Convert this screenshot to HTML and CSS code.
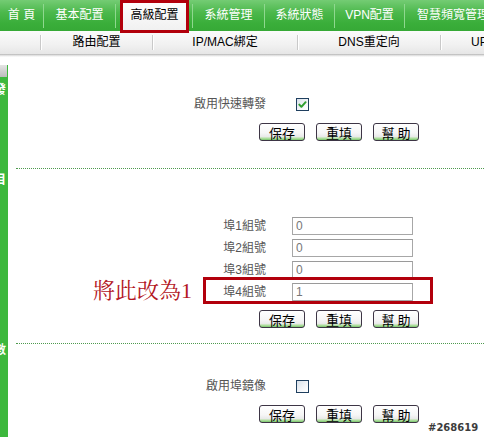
FILE: index.html
```html
<!DOCTYPE html>
<html lang="zh-Hant">
<head>
<meta charset="utf-8">
<title>高級配置</title>
<link rel="stylesheet" href="styles.css">
</head>
<body>
<div class="page">
  <header class="header">
    <nav class="topnav">
      <div class="nav-item w-home">首 頁</div>
      <span class="nav-sep"></span>
      <div class="nav-item w-71">基本配置</div>
      <span class="nav-sep"></span>
      <div class="nav-slot">
        <div class="nav-active">高級配置<span class="mark-box mark-tab"></span></div>
      </div>
      <span class="nav-sep"></span>
      <div class="nav-item w-71">系統管理</div>
      <span class="nav-sep"></span>
      <div class="nav-item w-69">系統狀態</div>
      <span class="nav-sep"></span>
      <div class="nav-item w-69">VPN配置</div>
      <span class="nav-sep"></span>
      <div class="nav-item nav-last">智慧頻寬管理</div>
    </nav>
    <nav class="subnav">
      <div class="sub-item w-40"></div>
      <span class="sub-sep"></span>
      <div class="sub-item w-111">路由配置</div>
      <span class="sub-sep"></span>
      <div class="sub-item w-144">IP/MAC綁定</div>
      <span class="sub-sep"></span>
      <div class="sub-item w-142">DNS重定向</div>
      <span class="sub-sep"></span>
      <div class="sub-item sub-last">UPnP配置</div>
    </nav>
    <div class="shadow"></div>
  </header>

  <div class="main">
    <aside class="sidebar">
      <div class="side-cap"></div>
      <span class="side-glyph g1">發</span>
      <span class="side-glyph g2">目</span>
      <span class="side-glyph g3">數</span>
    </aside>

    <div class="content">
      <section class="sec sec1">
        <div class="row row-check">
          <span class="label">啟用快速轉發</span>
          <span class="checkbox">
            <svg viewBox="0 0 11 11" width="11" height="11"><path d="M2.3 5.6 L4.4 7.8 L8.6 3.2" fill="none" stroke="#2f9e2f" stroke-width="2" stroke-linecap="round" stroke-linejoin="round"/></svg>
          </span>
        </div>
        <div class="btns">
          <button class="btn">保存</button>
          <button class="btn">重填</button>
          <button class="btn">幫 助</button>
        </div>
      </section>

      <section class="sec sec2">
        <div class="row row-input">
          <span class="label">埠1組號</span>
          <input class="field" type="text" value="0">
        </div>
        <div class="row row-input">
          <span class="label">埠2組號</span>
          <input class="field" type="text" value="0">
        </div>
        <div class="row row-input">
          <span class="label">埠3組號</span>
          <input class="field" type="text" value="0">
        </div>
        <div class="row row-input row-marked">
          <span class="note">將此改為1</span>
          <span class="label">埠4組號</span>
          <input class="field" type="text" value="1">
          <span class="mark-box mark-row"></span>
        </div>
        <div class="btns btns-tight">
          <button class="btn">保存</button>
          <button class="btn">重填</button>
          <button class="btn">幫 助</button>
        </div>
      </section>

      <section class="sec sec3">
        <div class="row row-check">
          <span class="label">啟用埠鏡像</span>
          <span class="checkbox"></span>
        </div>
        <div class="btns">
          <button class="btn">保存</button>
          <button class="btn">重填</button>
          <button class="btn">幫 助</button>
        </div>
      </section>
    </div>
  </div>
  <div class="watermark">#268619</div>
</div>
</body>
</html>
```

FILE: styles.css
```css
html, body {
  margin: 0;
  padding: 0;
  height: 100%;
  overflow: hidden;
  background: #ffffff;
}

body {
  font-family: "Liberation Sans", "Noto Sans CJK TC", sans-serif;
  font-size: 12px;
  color: #222;
}

.page {
  position: relative;
  display: flex;
  flex-direction: column;
  height: 100%;
}

/* ---------- top navigation ---------- */
.topnav {
  display: flex;
  align-items: center;
  height: 31px;
  background: linear-gradient(to bottom, #74cc74 0%, #4cb84c 40%, #3aae3a 75%, #36a936 100%);
  color: #ffffff;
  white-space: nowrap;
  overflow: visible;
}

.nav-item {
  flex: none;
  height: 31px;
  line-height: 31px;
  text-align: center;
}

.w-home { width: 43px; }
.w-71 { width: 71px; }
.w-69 { width: 69px; }

.nav-last {
  flex: 1;
  text-align: left;
  padding-left: 12px;
  overflow: hidden;
}

.nav-sep {
  flex: none;
  width: 1px;
  height: 24px;
  background: #8fd88f;
}

.nav-slot {
  flex: none;
  width: 76px;
  height: 31px;
  display: flex;
}

.nav-active {
  position: relative;
  margin-left: 7px;
  width: 63px;
  height: 31px;
  line-height: 31px;
  text-align: center;
  background: linear-gradient(to bottom, #ffffff, #f0f0f0);
  color: #000;
}

/* annotation boxes */
.mark-box {
  position: absolute;
  box-sizing: border-box;
  border: 3px solid #b2000c;
  pointer-events: none;
}

.mark-tab {
  left: -3px;
  top: 0;
  width: 69px;
  height: 33px;
}

/* ---------- sub navigation ---------- */
.subnav {
  display: flex;
  align-items: center;
  height: 23px;
  background: linear-gradient(to bottom, #fbfbfb 0%, #f1f1f1 60%, #e6e6e6 100%);
  color: #000;
  white-space: nowrap;
  overflow: hidden;
}

.sub-item {
  flex: none;
  line-height: 23px;
  text-align: center;
}

.w-40 { width: 40px; }
.w-111 { width: 111px; }
.w-144 { width: 144px; }
.w-142 { width: 142px; }

.sub-last {
  flex: 1;
  text-align: left;
  padding-left: 30px;
}

.sub-sep {
  flex: none;
  width: 1px;
  height: 15px;
  background: #c9c9c9;
  box-shadow: 1px 0 0 #ffffff;
}

.shadow {
  height: 3px;
  background: linear-gradient(to bottom, #b4b4b4, #e2e2e2 50%, #ffffff);
}

/* ---------- main ---------- */
.main {
  flex: 1;
  display: flex;
}

.sidebar {
  flex: none;
  width: 8px;
  margin-top: 8px;
  background: #3db83d;
  display: flex;
  flex-direction: column;
  overflow: hidden;
}

.side-cap {
  height: 12px;
  width: 7px;
  background: linear-gradient(to bottom, #e4e4e4, #bcbcbc);
}

.side-glyph {
  display: block;
  margin-left: -6px;
  font-size: 12px;
  line-height: 12px;
  font-weight: bold;
  color: #ffffff;
  font-family: "Noto Sans CJK TC", sans-serif;
}

.g1 { margin-top: 6px; }
.g2 { margin-top: 78px; }
.g3 { margin-top: 158px; }

.content {
  flex: 1;
  margin-left: 8px;
  display: flex;
  flex-direction: column;
}

.sec {
  border-bottom: 1px dotted #4e9a4e;
}

.sec1 { padding: 39px 0 27px; }
.sec2 { padding: 46px 0 15px; }
.sec3 { padding: 34px 0 0; border-bottom: none; }

.row {
  display: flex;
  align-items: center;
}

.row-check { height: 16px; }
.row-input { height: 22px; }

.label {
  flex: none;
  width: 250px;
  text-align: right;
  color: #555;
  font-family: "Liberation Sans", "Noto Sans CJK TC", sans-serif;
  line-height: 16px;
}

.checkbox {
  flex: none;
  box-sizing: border-box;
  width: 13px;
  height: 13px;
  margin-left: 30px;
  border: 1px solid #1f3f5f;
  background: linear-gradient(135deg, #d9e1ea 0%, #f4f6f9 60%, #ffffff 100%);
  display: flex;
  align-items: center;
  justify-content: center;
}

.field {
  flex: none;
  box-sizing: border-box;
  width: 121px;
  height: 18px;
  margin: 0 0 0 26px;
  padding: 0 3px;
  border: 1px solid #a7a7a7;
  border-top-color: #9a9a9a;
  font-family: "Liberation Sans", sans-serif;
  font-size: 12px;
  color: #777;
  background: #fff;
  outline: none;
}

.row-marked {
  position: relative;
}

.mark-row {
  left: 187px;
  top: -4px;
  width: 230px;
  height: 27px;
}

.note {
  position: absolute;
  left: 77px;
  top: -1px;
  font-family: "Liberation Serif", "Noto Serif CJK TC", "Noto Sans CJK TC", serif;
  font-size: 22px;
  line-height: 22px;
  color: #b3161e;
  white-space: nowrap;
}

/* ---------- buttons ---------- */
.btns {
  display: flex;
  gap: 11px;
  padding-left: 243px;
  margin-top: 11px;
}

.btns-tight { margin-top: 7px; }

.btn {
  flex: none;
  box-sizing: border-box;
  width: 46px;
  height: 18px;
  padding: 0;
  border: 1px solid #3d3545;
  border-radius: 3px;
  background: linear-gradient(to bottom, #ffffff 0%, #f6f6f6 55%, #eaeaea 78%, #b9e2a9 88%, #78c66a 100%);
  font-family: "Noto Sans CJK TC", sans-serif;
  font-size: 13px;
  line-height: 15px;
  color: #000;
}

/* ---------- watermark ---------- */
.watermark {
  position: absolute;
  left: 428px;
  top: 422px;
  font-family: "DejaVu Sans", sans-serif;
  font-weight: bold;
  font-size: 10px;
  line-height: 12px;
  color: #3c3c3c;
  text-shadow: 1px 0 0 #fff, -1px 0 0 #fff, 0 1px 0 #fff, 0 -1px 0 #fff;
}
```
